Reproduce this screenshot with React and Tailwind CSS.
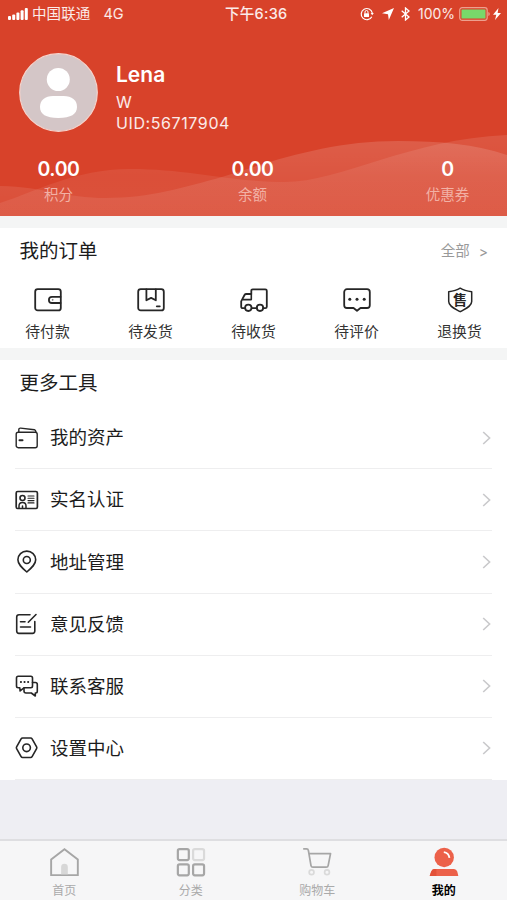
import React from "react";

const SANS = "font-['Inter','Noto_Sans_CJK_SC',sans-serif]";

function StatusBar() {
  return (
    <div className="relative flex h-7 items-center justify-between pl-2 pr-[6px] text-[14.5px] leading-none text-white/90">
      <div className="flex items-center">
        <svg width="20" height="12" viewBox="0 0 20 12" fill="#fff">
          <rect x="0" y="8" width="3" height="4" rx="1" />
          <rect x="4.2" y="6.5" width="3" height="5.5" rx="1" />
          <rect x="8.4" y="4.5" width="3" height="7.5" rx="1" />
          <rect x="12.6" y="2.3" width="3" height="9.7" rx="1" />
          <rect x="16.8" y="0" width="3" height="12" rx="1" />
        </svg>
        <span className="ml-1 tracking-[0.1px]">中国联通</span>
        <span className="ml-[13px] text-[14.5px]">4G</span>
      </div>
      <div className="absolute left-[225px] font-medium tracking-[0.3px]">下午6:36</div>
      <div className="flex items-center">
        <svg width="14" height="14" viewBox="0 0 14 14" fill="none" stroke="#fff" strokeWidth="1.2">
          <path d="M11.8 9.7A5.6 5.6 0 1 1 12.3 6" />
          <path d="M10.6 6h3.2l-1.6 2.2z" fill="#fff" stroke="none" />
          <rect x="4" y="6.2" width="5" height="3.8" rx=".5" fill="#fff" stroke="none" />
          <path d="M5 6.5V5a1.5 1.5 0 0 1 3 0v1.5" strokeWidth="1" />
        </svg>
        <svg className="ml-2" width="12" height="12" viewBox="0 0 12 12" fill="#fff">
          <path d="M12 0L6.8 12L6 6.2L0 5.3z" />
        </svg>
        <svg className="ml-[7px]" width="9" height="14" viewBox="0 0 9 14" fill="none" stroke="#fff" strokeWidth="1.3">
          <path d="M.7 3.8L8 10L4.5 13V1L8 4L.7 10.2" />
        </svg>
        <span className="ml-2 w-[38px] whitespace-nowrap text-[14px]">100%</span>
        <svg className="ml-[3px]" width="31" height="14" viewBox="0 0 31 14">
          <rect x=".7" y=".7" width="27.5" height="12.6" rx="2.5" fill="none" stroke="#eda08e" strokeWidth="1.2" />
          <rect x="2.5" y="2.5" width="24" height="9" rx=".5" fill="#78d86a" />
          <path d="M29.3 5v4q1.5-.5 1.5-2t-1.5-2" fill="#eda08e" />
        </svg>
        <svg className="ml-[3px]" width="8" height="12" viewBox="0 0 8 12" fill="#fff">
          <path d="M5.5 0L0 6.8h3.3L2 12l6-7H4.6z" />
        </svg>
      </div>
    </div>
  );
}

function Waves() {
  return (
    <svg className="absolute inset-0" width="507" height="216" viewBox="0 0 507 216">
      <defs>
        <linearGradient id="waveA" gradientUnits="userSpaceOnUse" x1="0" y1="135" x2="0" y2="216">
          <stop offset="0" stopColor="#fff" stopOpacity=".15" />
          <stop offset="1" stopColor="#fff" stopOpacity=".06" />
        </linearGradient>
        <linearGradient id="waveB" gradientUnits="userSpaceOnUse" x1="0" y1="135" x2="0" y2="216">
          <stop offset="0" stopColor="#fff" stopOpacity=".11" />
          <stop offset=".5" stopColor="#fff" stopOpacity=".07" />
          <stop offset="1" stopColor="#fff" stopOpacity=".08" />
        </linearGradient>
      </defs>
      <path fill="url(#waveA)" d="M0 186C45 187 65 198 106 198C150 198 185 187 222 177C275 160 330 141 398 141C440 141 475 144 507 155V216H0z" />
      <path fill="url(#waveB)" d="M0 203C35 192 75 169 130 169C190 169 230 182 285 182C340 182 410 139 507 135V216H0z" />
    </svg>
  );
}

const stats = [
  { value: "0.00", label: "积分", width: "w-[117px]" },
  { value: "0.00", label: "余额", width: "w-[120px]" },
  { value: "0", label: "优惠券", width: "w-[119px]" },
];

function Header() {
  return (
    <header className="relative h-[216px] overflow-hidden bg-[#d8422a]">
      <Waves />
      <StatusBar />
      <div className="relative flex pl-[19px] pt-[25px]">
        <svg width="79" height="79" viewBox="0 0 79 79">
          <circle cx="39.5" cy="39.5" r="38.8" fill="#d4c6c7" stroke="#f5d3cc" strokeWidth="1.2" />
          <circle cx="39.3" cy="26.5" r="11.5" fill="#fff" />
          <path fill="#fff" d="M34 43h10.5C53 43 58 47 58 54S52 65 39.3 65S21 61 21 54S26 43 34 43z" />
        </svg>
        <div className="ml-[18px] pt-[10px] text-white">
          <div className="text-[21px] font-semibold leading-6">Lena</div>
          <div className="mt-[5px] text-[16px] leading-[21px] text-white/90">W</div>
          <div className="text-[16px] leading-5 tracking-[0.6px] text-white/90">UID:56717904</div>
        </div>
      </div>
      <div className="relative mt-[25px] flex justify-between">
        {stats.map((s) => (
          <div key={s.label} className={`flex flex-col items-center ${s.width}`}>
            <span className="text-[19.5px] font-semibold leading-[22px] tracking-[-0.4px] text-white">{s.value}</span>
            <span className="mt-1 text-[14.5px] leading-[22px] text-[#f2b1a5]">{s.label}</span>
          </div>
        ))}
      </div>
    </header>
  );
}

const stroke = { fill: "none", stroke: "#262626", strokeWidth: 1.8, strokeLinejoin: "round", strokeLinecap: "round" };

const orders = [
  {
    label: "待付款",
    icon: (
      <svg width="28" height="26" viewBox="0 0 28 26" {...stroke}>
        <rect x="1.2" y="2.2" width="25.6" height="21.2" rx="2.5" />
        <path d="M26.5 9.8H18a3.1 3.1 0 0 0 0 6.2h8.5" />
        <circle cx="18.5" cy="12.9" r=".5" strokeWidth=".4" />
      </svg>
    ),
  },
  {
    label: "待发货",
    icon: (
      <svg width="28" height="26" viewBox="0 0 28 26" {...stroke}>
        <rect x="1.2" y="2.2" width="25.6" height="21.2" rx="2.5" />
        <path d="M9.4 2.5v10.8l4.7-2.4l4.7 2.4V2.5" />
        <path d="M19.8 19.3h3" />
      </svg>
    ),
  },
  {
    label: "待收货",
    icon: (
      <svg width="28" height="26" viewBox="0 0 28 26" {...stroke}>
        <path d="M4.5 21.2H2.7a1.5 1.5 0 0 1-1.5-1.5v-5.4L4.5 8q.6-1 1.8-1h5V3.8q0-1.5 1.5-1.5h12.5q1.5 0 1.5 1.5v15.9q0 1.5-1.5 1.5H23M17 21.2h-5.2" />
        <path d="M11.3 7v5.6H3" strokeWidth="1.6" />
        <circle cx="8.3" cy="20.8" r="3.2" />
        <circle cx="20" cy="20.8" r="3.2" />
      </svg>
    ),
  },
  {
    label: "待评价",
    icon: (
      <svg width="28" height="26" viewBox="0 0 28 26" {...stroke}>
        <path d="M4 2.2h20a2.8 2.8 0 0 1 2.8 2.8v13.2A2.8 2.8 0 0 1 24 21h-6.500L14 23.8L10.5 21H4a2.8 2.8 0 0 1-2.8-2.8V5A2.8 2.8 0 0 1 4 2.2z" />
        <g fill="#262626" stroke="none">
          <circle cx="6.8" cy="12.3" r="1.5" />
          <circle cx="14" cy="12.3" r="1.5" />
          <circle cx="21.2" cy="12.3" r="1.5" />
        </g>
      </svg>
    ),
  },
  {
    label: "退换货",
    icon: (
      <span className="relative flex h-[26px] w-7 items-center justify-center">
        <svg className="absolute inset-0" width="28" height="26" viewBox="0 0 28 26" {...stroke} strokeWidth="1.5">
          <path d="M14.2 1.2Q18.5 4 25.7 4.700V14.500c0 4.800-6 7-11.5 10.200C8.700 21.500 2.700 19.300 2.700 14.500V4.700Q9.900 4 14.200 1.200z" />
        </svg>
        <span className="relative text-[14px] font-bold leading-none text-[#262626]">售</span>
      </span>
    ),
  },
];

function Orders() {
  return (
    <section className="mt-3 h-[120px] bg-white">
      <div className="flex h-[46px] items-center justify-between pl-[19.5px] pr-[19px]">
        <h2 className="pt-0.5 text-[19.5px] text-[#1c1c1c]">我的订单</h2>
        <div className="flex items-center text-[14.5px] text-[#999]">
          全部<span className="ml-[9px] text-[14px]">&gt;</span>
        </div>
      </div>
      <div className="flex justify-between pl-[18px] pr-[17px] pt-[13px]">
        {orders.map((o) => (
          <div key={o.label} className="flex w-[60px] flex-col items-center">
            {o.icon}
            <span className="mr-px mt-2 text-[14.8px] leading-[22px] text-[#333]">{o.label}</span>
          </div>
        ))}
      </div>
    </section>
  );
}

const line = { ...stroke, strokeWidth: 1.4 };

const tools = [
  {
    label: "我的资产",
    icon: (
      <svg width="24" height="24" viewBox="0 0 24 24" {...line}>
        <rect x="1.2" y="6.2" width="21" height="15.5" rx="2" />
        <path d="M3.8 6V3.7q0-1.800 1.800-1.600L19.5 3.8q1.200.2 1.500 2.400" />
        <path d="M4.500 14.200h3" strokeWidth="2" />
      </svg>
    ),
  },
  {
    label: "实名认证",
    icon: (
      <svg width="24" height="24" viewBox="0 0 24 24" {...line}>
        <rect x="1.2" y="3.5" width="21.2" height="17" rx="1.5" strokeWidth="1.7" />
        <circle cx="7.5" cy="10" r="2.5" strokeWidth="1.6" />
        <path d="M4 20v-2q0-3.500 3.500-3.500T11 18v2M7.500 18v2" strokeWidth="1.5" />
        <path d="M13 8h6M13 10.300h6M13 12.600h6M13 14.900h6" strokeWidth="1.1" />
      </svg>
    ),
  },
  {
    label: "地址管理",
    icon: (
      <svg width="24" height="24" viewBox="0 0 24 24" {...line} strokeWidth="1.6">
        <path d="M11.8 22C7 17.800 2.900 14.300 2.900 9.800a8.900 8.700 0 0 1 17.800 0c0 4.500-4.100 8-8.900 12.200z" />
        <circle cx="11.8" cy="10" r="3.5" />
      </svg>
    ),
  },
  {
    label: "意见反馈",
    icon: (
      <svg width="24" height="24" viewBox="0 0 24 24" {...line} strokeWidth="1.6">
        <path d="M15 2.800H4q-2.300 0-2.300 2.300v14Q1.700 21.400 4 21.400h13.500q2.300 0 2.300-2.300V9.500" />
        <path d="M21 2.500L13.300 10.200M5.500 9.800h4.500M5.500 15h10" />
      </svg>
    ),
  },
  {
    label: "联系客服",
    icon: (
      <svg width="24" height="24" viewBox="0 0 24 24" {...line} strokeWidth="1.6">
        <path d="M3.200 2.300h12.600q1.700 0 1.700 1.700v8q0 1.700-1.700 1.700H9.300l-4.200 3.200l-.3-3.200H3.200q-1.700 0-1.700-1.700V4q0-1.700 1.700-1.700z" />
        <path d="M17.500 8.500h2.800q2 0 2 2v6.800q0 1.700-1.700 1.700h-.3v3l-4-3H11q-2 0-2-2v-3" />
        <path d="M5.800 8h.3M9.400 8h.3M13 8h.3" strokeWidth="1.8" />
      </svg>
    ),
  },
  {
    label: "设置中心",
    icon: (
      <svg width="24" height="24" viewBox="0 0 24 24" {...line} strokeWidth="1.6">
        <path d="M7.600 2h8q1 0 1.500.8l4.500 8q.5.9 0 1.800l-4.500 8q-.5.9-1.500.9h-8q-1 0-1.500-.9l-4.500-8q-.5-.9 0-1.800l4.500-8Q6.600 2 7.600 2z" />
        <circle cx="11.6" cy="11.8" r="3.8" />
      </svg>
    ),
  },
];

function Tools() {
  return (
    <section className="mt-3 flex h-[420px] flex-col bg-white">
      <h2 className="flex h-[47px] shrink-0 items-center pl-[19.5px] text-[19.5px] text-[#1c1c1c]">更多工具</h2>
      {tools.map((t) => (
        <div key={t.label} className="mx-[15px] flex flex-1 items-center border-b-[1.5px] border-[#eeeeef]">
          {t.icon}
          <span className="ml-[11px] grow pt-px text-[18.5px] text-[#1c1c1c]">{t.label}</span>
          <svg className="mr-px" width="9" height="14" viewBox="0 0 9 14" fill="none" stroke="#c9c9cb" strokeWidth="1.6">
            <path d="M1.200 1L7.600 7L1.200 13" />
          </svg>
        </div>
      ))}
    </section>
  );
}

const tabs = [
  {
    label: "首页",
    color: "text-[#aaa]",
    icon: (
      <svg width="32" height="32" viewBox="0 0 32 32" fill="none" stroke="#a6a6a6" strokeWidth="2">
        <path d="M2.500 13L16.500 2.300L30.500 13V29.500H2.500z" />
        <path d="M13 28.500V21a3.500 3.500 0 0 1 7 0v7.500z" fill="#d7d7d7" stroke="none" />
      </svg>
    ),
  },
  {
    label: "分类",
    color: "text-[#aaa]",
    icon: (
      <svg width="32" height="32" viewBox="0 0 32 32" fill="none" stroke="#a6a6a6" strokeWidth="2.3">
        <rect x="2.2" y="2.2" width="11.5" height="11.5" rx="1.8" />
        <rect x="18.2" y="2.2" width="11.5" height="11.5" rx="1.8" stroke="#dadada" />
        <rect x="2.2" y="18.2" width="11.5" height="11.5" rx="1.8" />
        <rect x="18.2" y="18.2" width="11.5" height="11.5" rx="1.8" />
      </svg>
    ),
  },
  {
    label: "购物车",
    color: "text-[#aaa]",
    icon: (
      <svg width="32" height="32" viewBox="0 0 32 32" fill="none" stroke="#a6a6a6" strokeWidth="1.8" strokeLinejoin="round">
        <path d="M1.500 2H5q1.700 0 2 1.700L9.700 19.500q.3 1.700 2 1.700h14q1.700 0 2-1.700L30.200 7H7.700" />
        <g stroke="#dadada">
          <circle cx="10.3" cy="26.5" r="2.5" />
          <circle cx="26.5" cy="26.5" r="2.5" />
        </g>
      </svg>
    ),
  },
  {
    label: "我的",
    color: "text-black font-bold",
    icon: (
      <svg width="32" height="32" viewBox="0 0 32 32">
        <circle cx="16.2" cy="11" r="10.2" fill="#ec614a" />
        <path d="M15.800 5.300q5.200.7 5.900 6" fill="none" stroke="#fff" strokeWidth="1.9" />
        <path d="M6 23h20.500q2.500 0 3.500 3l1 4.500H1l1.500-4.500Q3.500 23 6 23z" fill="#ec614a" />
        <path d="M5.500 23H8v7.500H1L2.500 26Q3.500 23 5.500 23z" fill="#e35139" />
      </svg>
    ),
  },
];

function TabBar() {
  return (
    <nav className="mt-[59px] flex h-[61px] border-t-2 border-[#dedee1] bg-[#f6f6f7] pl-px pt-1.5">
      {tabs.map((t) => (
        <div key={t.label} className="flex flex-1 flex-col items-center">
          {t.icon}
          <span className={`mt-[4.5px] text-[12px] leading-[18px] ${t.color}`}>{t.label}</span>
        </div>
      ))}
    </nav>
  );
}

export default function App() {
  return (
    <div className={`h-[900px] w-[507px] overflow-hidden bg-[#eeeef3] ${SANS}`}>
      <div className="bg-[#f4f5f5]">
        <Header />
        <Orders />
        <Tools />
      </div>
      <TabBar />
    </div>
  );
}
